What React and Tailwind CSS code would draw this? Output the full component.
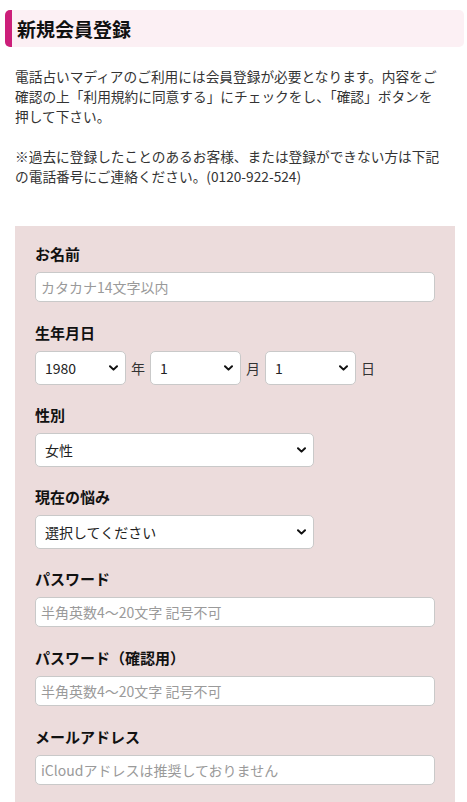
import React from 'react';

const Chevron = () => (
  <svg
    className="pointer-events-none absolute right-[8px] top-1/2 -translate-y-1/2"
    width="9"
    height="6"
    viewBox="0 0 9 6"
    fill="none"
  >
    <path d="M1 1.2 L4.5 4.6 L8 1.2" stroke="#111" strokeWidth="2" strokeLinecap="round" strokeLinejoin="round" />
  </svg>
);

const Select = ({ value, options, className }) => (
  <div className={`relative ${className}`}>
    <select
      defaultValue={value}
      className="w-full h-[34px] appearance-none bg-white border border-[#c9c9c9] rounded-[5px] pl-[9px] pr-6 text-[14px] text-[#222] outline-none"
    >
      {options.map((o) => (
        <option key={o}>{o}</option>
      ))}
    </select>
    <Chevron />
  </div>
);

const TextInput = ({ placeholder, type = 'text' }) => (
  <input
    type={type}
    placeholder={placeholder}
    className="block w-full h-[30px] bg-white border border-[#c9c9c9] rounded-[5px] px-[5px] text-[14px] text-[#222] placeholder:text-[#9a9a9a] outline-none"
  />
);

const Field = ({ label, children, tight }) => (
  <div className={tight ? 'mb-[19px]' : 'mb-5'}>
    <p className="text-[15px] leading-[22px] font-bold text-[#111] mb-[7px]">{label}</p>
    {children}
  </div>
);

const years = ['1980', '1981', '1982'];
const months = Array.from({ length: 12 }, (_, i) => String(i + 1));
const days = Array.from({ length: 31 }, (_, i) => String(i + 1));

export default function App() {
  return (
    <div
      className="min-h-screen bg-white pt-[10px] text-[#333]"
      style={{ fontFamily: '"Noto Sans CJK JP", "Noto Sans", sans-serif' }}
    >
      <div className="ml-[5px] w-[459px] h-[37px] flex items-center bg-[#fcf0f4] border-l-[7px] border-[#cc1f7a] rounded-[5px] pl-[5px]">
        <h1 className="text-[19px] font-bold text-[#111] leading-none">新規会員登録</h1>
      </div>

      <div className="mt-[19px] px-[15px] text-[13.7px] leading-[20px] whitespace-nowrap text-[#333]">
        <p>
          電話占いマディアのご利用には会員登録が必要となります。内容をご
          <br />
          確認の上「利用規約に同意する」にチェックをし、「確認」ボタンを
          <br />
          押して下さい。
        </p>
        <p className="mt-[20px]">
          ※過去に登録したことのあるお客様、または登録ができない方は下記
          <br />
          の電話番号にご連絡ください。(0120-922-524)
        </p>
      </div>

      <div className="mt-[40px] ml-[15px] w-[440px] bg-[#ecdcdc] px-5 pt-[17px] pb-6">
        <Field label="お名前">
          <TextInput placeholder="カタカナ14文字以内" />
        </Field>

        <Field label="生年月日" tight>
          <div className="flex items-center text-[14px] text-[#333]">
            <Select value="1980" options={years} className="w-[91px]" />
            <span className="mx-[5px]">年</span>
            <Select value="1" options={months} className="w-[91px]" />
            <span className="mx-[5px]">月</span>
            <Select value="1" options={days} className="w-[91px]" />
            <span className="ml-[5px]">日</span>
          </div>
        </Field>

        <Field label="性別" tight>
          <Select value="女性" options={['女性', '男性']} className="w-[279px]" />
        </Field>

        <Field label="現在の悩み" tight>
          <Select value="選択してください" options={['選択してください', '恋愛', '仕事', '人間関係']} className="w-[279px]" />
        </Field>

        <Field label="パスワード">
          <TextInput placeholder="半角英数4～20文字 記号不可" type="password" />
        </Field>

        <Field label="パスワード（確認用）">
          <TextInput placeholder="半角英数4～20文字 記号不可" type="password" />
        </Field>

        <Field label="メールアドレス">
          <TextInput placeholder="iCloudアドレスは推奨しておりません" type="email" />
        </Field>
      </div>
    </div>
  );
}
